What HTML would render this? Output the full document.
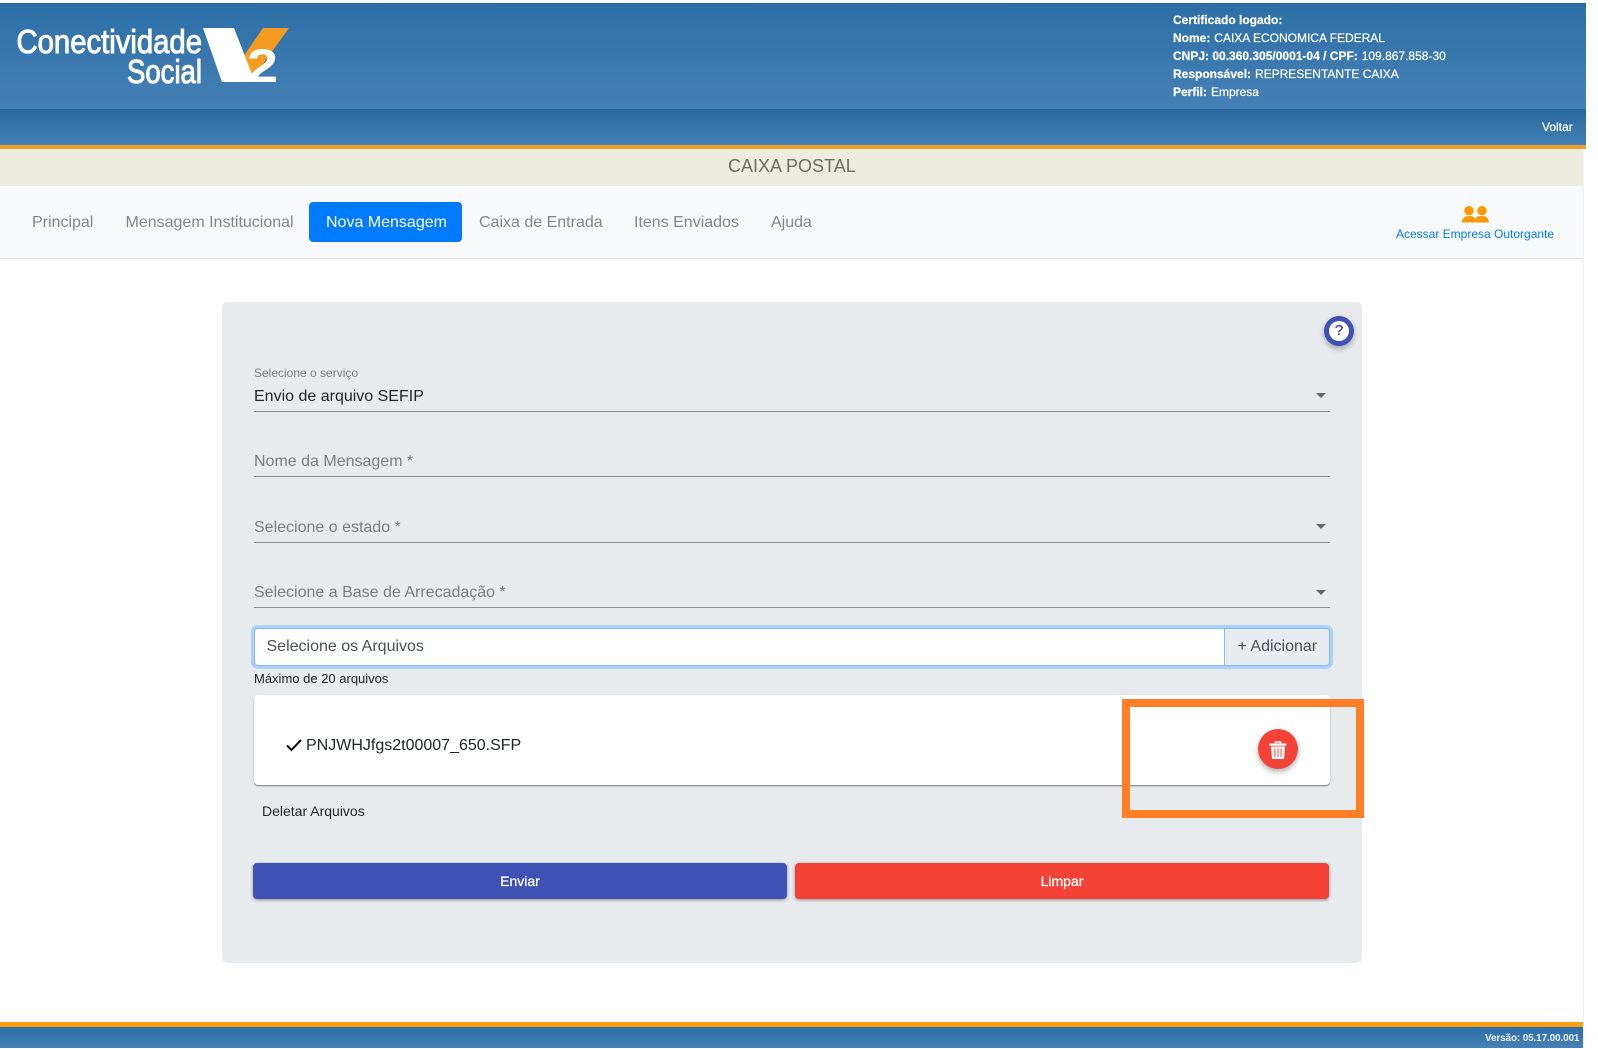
<!DOCTYPE html>
<html lang="pt-BR">
<head>
<meta charset="utf-8">
<title>Caixa Postal</title>
<style>
*{box-sizing:border-box}
html,body{margin:0;padding:0;width:1598px;height:1048px;overflow:hidden;background:#fff;font-family:"Liberation Sans",sans-serif}
.a{position:absolute}
.t{position:absolute;white-space:nowrap;line-height:20px}
.hdr{color:#fff;font-size:12px;left:1173px;-webkit-text-stroke:.2px #fff}
.hdr b{font-weight:bold;margin-right:.6px}
.nav{font-size:16px;color:#82868a;top:213px}
.line{position:absolute;left:254px;width:1076px;height:1px;background:#8c8e90}
.ph{font-size:16px;color:#7b7d80;left:254px}
.arrow{position:absolute;left:1316px;width:0;height:0;border-left:5px solid transparent;border-right:5px solid transparent;border-top:5px solid #666}
</style>
</head>
<body>
<div class="a" style="left:0;top:3px;width:1586px;height:106px;background:linear-gradient(#2c6ea6,#4681b5)"></div>
<div class="a" style="left:0;top:109px;width:1586px;height:36px;background:linear-gradient(#2a68a0,#4380b4)"></div>
<div class="a" style="left:0;top:145px;width:1586px;height:4px;background:#eea028"></div>
<div class="a" style="left:0;top:149px;width:1583px;height:37px;background:#ededdf"></div>
<div class="a" style="left:0;top:186px;width:1583px;height:73px;background:#f8f9fa;border-bottom:1px solid #dcdce2"></div>
<div class="a" style="left:1583px;top:149px;width:1px;height:899px;background:#eef0f2"></div>

<svg class="a" style="left:0;top:0" width="320" height="110" viewBox="0 0 320 110">
  <polygon points="263,28 289,28 250,82 241,60" fill="#f39c1f"/>
  <polygon points="203,28 234,28 255,82 222,82" fill="#fff"/>
  <text x="16.5" y="53" font-family="Liberation Sans" font-size="33" fill="#fff" textLength="185.5" lengthAdjust="spacingAndGlyphs" stroke="#fff" stroke-width="1">Conectividade</text>
  <text x="127" y="83" font-family="Liberation Sans" font-size="33" fill="#fff" textLength="75" lengthAdjust="spacingAndGlyphs" stroke="#fff" stroke-width="1">Social</text>
  <text x="247" y="82" font-family="Liberation Sans" font-size="47" font-weight="bold" fill="#fff" textLength="31" lengthAdjust="spacingAndGlyphs">2</text>
</svg>

<div class="t hdr" style="top:10px"><b>Certificado logado:</b></div>
<div class="t hdr" style="top:28px"><b>Nome:</b> CAIXA ECONOMICA FEDERAL</div>
<div class="t hdr" style="top:46px"><b>CNPJ: 00.360.305/0001-04 / CPF:</b> 109.867.858-30</div>
<div class="t hdr" style="top:64px"><b>Responsável:</b> REPRESENTANTE CAIXA</div>
<div class="t hdr" style="top:82px"><b>Perfil:</b> Empresa</div>
<div class="t hdr" style="left:1542px;top:117px">Voltar</div>

<div class="t" style="left:728px;top:156px;font-size:18px;color:#6b6b6b;line-height:20px">CAIXA POSTAL</div>

<div class="t nav" style="left:32px">Principal</div>
<div class="t nav" style="left:125.5px">Mensagem Institucional</div>
<div class="a" style="left:309px;top:202px;width:153px;height:40px;background:#007bff;border-radius:4px"></div>
<div class="t nav" style="left:326px;color:#fff">Nova Mensagem</div>
<div class="t nav" style="left:479px">Caixa de Entrada</div>
<div class="t nav" style="left:634px">Itens Enviados</div>
<div class="t nav" style="left:771px">Ajuda</div>

<svg class="a" style="left:1461.5px;top:206px" width="27" height="17" viewBox="0 0 27 17">
  <g fill="#ff9800">
    <circle cx="7" cy="4.7" r="4.7"/>
    <circle cx="20" cy="4.7" r="4.7"/>
    <path d="M0 16.5C0 12 3 10 7 10c2.8 0 4.9 1 6 2.8C14.100 11 16.500 10 20 10c4 0 7 2 7 6.500z"/>
  </g>
</svg>
<div class="t" style="left:1396px;top:224px;font-size:12px;color:#007bff">Acessar Empresa Outorgante</div>

<div class="a" style="left:222px;top:302px;width:1140px;height:661px;background:#e8ebee;border-radius:5px"></div>

<div class="a" style="left:1324px;top:316px;width:30px;height:30px;border-radius:50%;background:#3f51b5;box-shadow:0 3px 6px rgba(0,0,0,.3)"></div>
<div class="a" style="left:1329px;top:321px;width:20px;height:20px;border-radius:50%;background:#fff;color:#3f51b5;font-size:15px;line-height:20px;text-align:center;-webkit-text-stroke:.4px #3f51b5">?</div>

<div class="t" style="left:254px;top:363px;font-size:12px;color:#7b7d80">Selecione o serviço</div>
<div class="t" style="left:254px;top:387px;font-size:16px;color:#212529">Envio de arquivo SEFIP</div>
<div class="line" style="top:411px"></div>
<div class="arrow" style="top:393px"></div>

<div class="t ph" style="top:452px">Nome da Mensagem *</div>
<div class="line" style="top:476px"></div>

<div class="t ph" style="top:518px">Selecione o estado *</div>
<div class="line" style="top:542px"></div>
<div class="arrow" style="top:524px"></div>

<div class="t ph" style="top:583px">Selecione a Base de Arrecadação *</div>
<div class="line" style="top:607px"></div>
<div class="arrow" style="top:590px"></div>

<div class="a" style="left:254px;top:628px;width:1076px;height:38px;background:#fff;border:1px solid #80bdff;border-radius:4px;box-shadow:0 0 0 3px #aed0f6"></div>
<div class="a" style="left:1224px;top:629px;width:105px;height:36px;background:#e9ecef;border-left:1px solid #80bdff;border-radius:0 3px 3px 0"></div>
<div class="t" style="left:266.500px;top:637px;font-size:16px;color:#495057">Selecione os Arquivos</div>
<div class="t" style="left:1237.500px;top:637px;font-size:16px;color:#495057">+ Adicionar</div>

<div class="t" style="left:254px;top:669px;font-size:13px;color:#212529">Máximo de 20 arquivos</div>

<div class="a" style="left:254px;top:695px;width:1076px;height:90px;background:#fff;border-radius:4px;box-shadow:0 1px 1px rgba(0,0,0,.42),0 1px 3px rgba(0,0,0,.1)"></div>
<svg class="a" style="left:286px;top:738px" width="16" height="14" viewBox="0 0 16 14"><path d="M1 7.500 5.500 12 15 2" fill="none" stroke="#111" stroke-width="2"/></svg>
<div class="t" style="left:306px;top:736px;font-size:16px;color:#212529">PNJWHJfgs2t00007_650.SFP</div>

<div class="a" style="left:1258px;top:729px;width:40px;height:40px;border-radius:50%;background:#f44336;box-shadow:0 3px 6px rgba(0,0,0,.3)"></div>
<svg class="a" style="left:1269px;top:741px" width="18" height="18" viewBox="0 0 18 18">
  <path d="M6.500 2.500V1h5v1.500" fill="none" stroke="#fff" stroke-width="1.500"/>
  <rect x="0.500" y="2.500" width="17" height="2.200" fill="#fff"/>
  <path d="M2 5.500H16L15 18H3z" fill="#fff"/>
  <g fill="#f77a70"><rect x="5.200" y="7.500" width="1.400" height="8.500"/><rect x="8.300" y="7.500" width="1.400" height="8.500"/><rect x="11.400" y="7.500" width="1.400" height="8.500"/></g>
</svg>

<div class="t" style="left:262px;top:801px;font-size:14px;color:#212529">Deletar Arquivos</div>

<div class="a" style="left:1122px;top:699px;width:242px;height:119px;border:8px solid #ff7f27"></div>

<div class="a" style="left:253px;top:863px;width:534px;height:36px;background:#3f51b5;border-radius:4px;box-shadow:0 1px 3px rgba(0,0,0,.4);color:#fff;font-size:14px;line-height:36px;text-align:center;-webkit-text-stroke:.25px #fff">Enviar</div>
<div class="a" style="left:795px;top:863px;width:534px;height:36px;background:#f44336;border-radius:4px;box-shadow:0 1px 3px rgba(0,0,0,.4);color:#fff;font-size:14px;line-height:36px;text-align:center;-webkit-text-stroke:.25px #fff">Limpar</div>

<div class="a" style="left:0;top:1022px;width:1583px;height:5px;background:#ff9e0f"></div>
<div class="a" style="left:0;top:1027px;width:1583px;height:21px;background:linear-gradient(#2c6ea6,#4681b5)"></div>
<div class="t" style="left:1485px;top:1029px;font-size:10px;color:#eaf0f6;font-weight:bold;letter-spacing:-.15px">Versão: 05.17.00.001</div>
</body>
</html>
